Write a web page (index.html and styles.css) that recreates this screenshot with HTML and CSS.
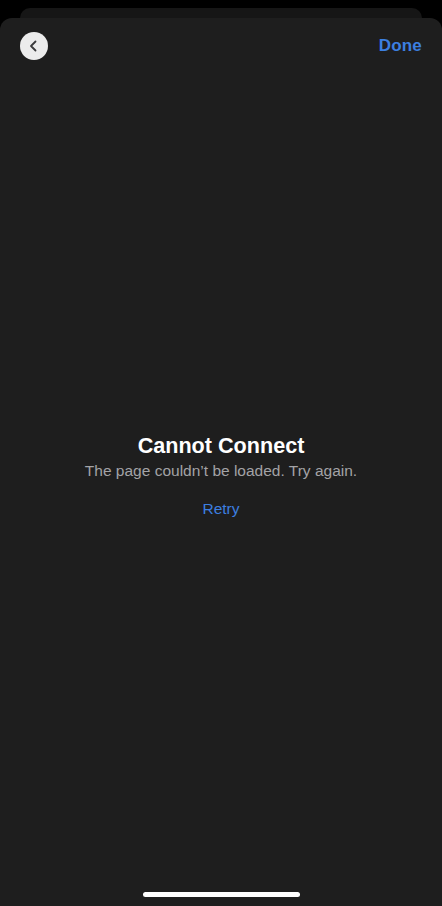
FILE: index.html
```html
<!DOCTYPE html>
<html>

<head>
    <title>Cannot Connect</title>
    <link rel="stylesheet" href="styles.css">
</head>

<body>
    <div class="backdrop">
        <div class="sheet-behind"></div>
        <div class="sheet">
            <div class="nav-bar">
                <button class="back-button" aria-label="Back">
                    <svg width="14" height="14" viewBox="0 0 14 14">
                        <path d="M8.5 2.5 L4 7 L8.5 11.5" fill="none" stroke="#3a3a3c" stroke-width="1.8"
                            stroke-linecap="round" stroke-linejoin="round" />
                    </svg>
                </button>
                <button class="done-button">Done</button>
            </div>

            <div class="message">
                <h1 class="title">Cannot Connect</h1>
                <p class="subtitle">The page couldn’t be loaded. Try again.</p>
                <button class="retry-button">Retry</button>
            </div>

            <div class="home-indicator"></div>
        </div>
    </div>
</body>

</html>
```

FILE: styles.css
```css
:root {
    --page-bg: #000;
    --sheet-bg: #1e1e1e;
    --behind-bg: #161616;
    --text-color: #ffffff;
    --muted-text: #a3a3a6;
    --accent: #3c7fe0;
}

* {
    margin: 0;
    padding: 0;
    box-sizing: border-box;
}

body {
    font-family: "Liberation Sans", Arial, sans-serif;
    background: var(--page-bg);
    height: 100vh;
    overflow: hidden;
    color: var(--text-color);
}

.backdrop {
    height: 100vh;
    display: flex;
    flex-direction: column;
    padding-top: 8px;
}

.sheet-behind {
    height: 10px;
    margin: 0 20px;
    background: var(--behind-bg);
    border-radius: 10px 10px 0 0;
    flex-shrink: 0;
}

.sheet {
    flex: 1;
    display: flex;
    flex-direction: column;
    background: var(--sheet-bg);
    border-radius: 12px 12px 0 0;
}

.nav-bar {
    display: flex;
    justify-content: space-between;
    align-items: center;
    padding: 14px 20px 0 20px;
}

button {
    background: none;
    border: none;
    font-family: inherit;
    cursor: pointer;
}

.back-button {
    width: 28px;
    height: 28px;
    border-radius: 50%;
    background: #ececec;
    display: flex;
    align-items: center;
    justify-content: center;
}

.done-button {
    color: var(--accent);
    font-size: 17px;
    font-weight: bold;
    letter-spacing: 0.2px;
}

.message {
    flex: 1;
    display: flex;
    flex-direction: column;
    align-items: center;
    justify-content: center;
}

.title {
    font-size: 21.6px;
    font-weight: bold;
    line-height: 26px;
}

.subtitle {
    font-size: 15.5px;
    line-height: 20px;
    color: var(--muted-text);
    margin-top: 2px;
}

.retry-button {
    color: var(--accent);
    font-size: 15.5px;
    line-height: 20px;
    margin-top: 18px;
}

.home-indicator {
    width: 157px;
    height: 5px;
    border-radius: 3px;
    background: #fff;
    margin: 0 auto 9px auto;
}
```
